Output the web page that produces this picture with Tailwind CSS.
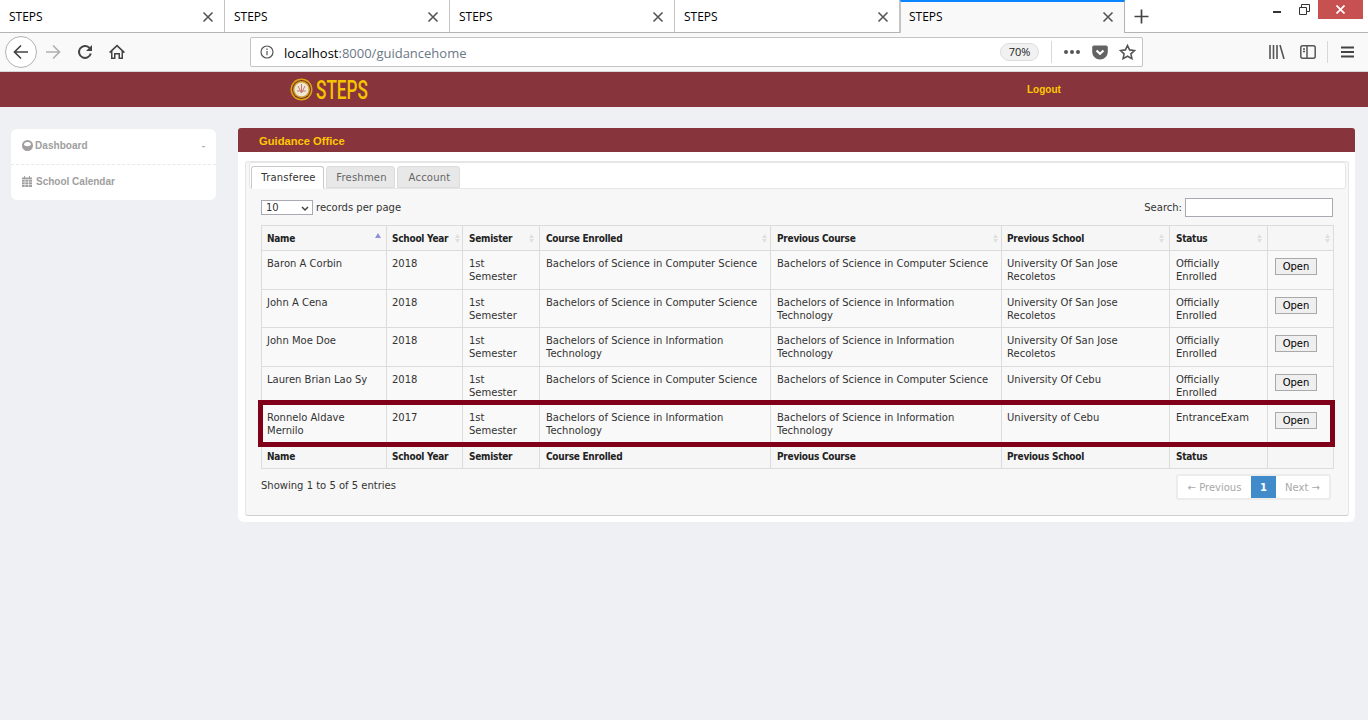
<!DOCTYPE html>
<html lang="en">
<head>
  <meta charset="UTF-8" />
  <title>STEPS</title>
  <script src="https://cdn.jsdelivr.net/npm/@tailwindcss/browser@4"></script>
</head>
<body class="bg-[#eef0f4] min-h-screen font-['Liberation_Sans',sans-serif] overflow-hidden">
  <!-- Tab strip -->
  <div class="h-[33px] bg-white border-b border-[#b4b4b4] flex relative font-['Open_Sans',sans-serif] text-[12px] text-black">
    <div class="w-[225px] h-[32px] pt-px border-r border-[#c4c4c4] flex items-center justify-between pl-[9px] pr-[10px]">
      <span>STEPS</span>
      <svg class="w-[12px] h-[12px] stroke-[#555]" viewBox="0 0 12 12" stroke-width="1.6"><path d="M1.5 1.5l9 9M10.5 1.5l-9 9" /></svg>
    </div>
    <div class="w-[225px] h-[32px] pt-px border-r border-[#c4c4c4] flex items-center justify-between pl-[9px] pr-[10px]">
      <span>STEPS</span>
      <svg class="w-[12px] h-[12px] stroke-[#555]" viewBox="0 0 12 12" stroke-width="1.6"><path d="M1.5 1.5l9 9M10.5 1.5l-9 9" /></svg>
    </div>
    <div class="w-[225px] h-[32px] pt-px border-r border-[#c4c4c4] flex items-center justify-between pl-[9px] pr-[10px]">
      <span>STEPS</span>
      <svg class="w-[12px] h-[12px] stroke-[#555]" viewBox="0 0 12 12" stroke-width="1.6"><path d="M1.5 1.5l9 9M10.5 1.5l-9 9" /></svg>
    </div>
    <div class="w-[225px] h-[32px] pt-px border-r border-[#c4c4c4] flex items-center justify-between pl-[9px] pr-[10px]">
      <span>STEPS</span>
      <svg class="w-[12px] h-[12px] stroke-[#555]" viewBox="0 0 12 12" stroke-width="1.6"><path d="M1.5 1.5l9 9M10.5 1.5l-9 9" /></svg>
    </div>
    <div class="w-[225px] h-[33px] pb-px bg-[#f9f9f9] border-t-2 border-t-[#0a84ff] border-r border-r-[#b4b4b4] border-l border-l-[#c4c4c4] flex items-center justify-between pl-[8px] pr-[10px]">
      <span>STEPS</span>
      <svg class="w-[12px] h-[12px] stroke-[#555]" viewBox="0 0 12 12" stroke-width="1.6"><path d="M1.5 1.5l9 9M10.5 1.5l-9 9" /></svg>
    </div>
    <div class="w-[32px] flex items-center justify-center">
      <svg class="w-[15px] h-[15px] stroke-[#444]" viewBox="0 0 15 15" stroke-width="1.7"><path d="M7.5 0.5v14M0.5 7.5h14" /></svg>
    </div>
    <!-- window buttons -->
    <div class="ml-auto flex h-[19px] items-start">
      <div class="w-[8px] h-[2px] bg-[#333] mt-[11px]"></div>
      <svg class="w-[11px] h-[11px] ml-[18px] mt-[4px] stroke-[#333] fill-none" viewBox="0 0 11 11" stroke-width="1"><path d="M0.5 3.5h7v7h-7zM2.5 3V0.5h8v7H8" /></svg>
      <div class="w-[45px] h-[19px] bg-[#c75050] ml-[8px] mr-[5px] flex items-center justify-center">
        <svg class="w-[9px] h-[9px] stroke-white" viewBox="0 0 9 9" stroke-width="1.7"><path d="M0.5 0.5l8 8M8.5 0.5l-8 8" /></svg>
      </div>
    </div>
  </div>

  <!-- Toolbar -->
  <div class="h-[39px] bg-[#f9f9f9] border-b border-[#d6d6d6] flex items-center relative">
    <div class="ml-[5px] w-[32px] h-[32px] rounded-full border border-[#b4b4b4] bg-white flex items-center justify-center">
      <svg class="w-[16px] h-[16px] stroke-[#444] fill-none" viewBox="0 0 16 16" stroke-width="1.7"><path d="M15 8H1.5M8 1.5L1.5 8 8 14.5" /></svg>
    </div>
    <svg class="w-[16px] h-[16px] ml-[8px] stroke-[#b0b0b0] fill-none" viewBox="0 0 16 16" stroke-width="1.7"><path d="M1 8h13.5M8 1.5L14.5 8 8 14.5" /></svg>
    <svg class="w-[16px] h-[16px] ml-[16px] stroke-[#444] fill-none" viewBox="0 0 16 16" stroke-width="2"><path d="M13.8 9.5A6 6 0 1 1 12.2 3.6L14 5.5" /><path class="fill-[#444] stroke-none" d="M15 1v6H9z" /></svg>
    <svg class="w-[16px] h-[16px] ml-[16px] fill-[#444]" viewBox="0 0 16 16"><path d="M8 0.5L0 8l1.2 1.3L2 8.600V15h4.500v-4.500h3V15H14V8.600l.8.700L16 8zM8 2.700l4.500 4.300V13.500h-1.500V9H5v4.500H3.500V7z" /></svg>
    <!-- address bar -->
    <div class="absolute left-[250px] top-[4px] w-[893px] h-[30px] bg-white border border-[#c4c4c4] rounded-[2px] flex items-center font-['Open_Sans',sans-serif]">
      <svg class="w-[14px] h-[14px] ml-[9px] stroke-[#555] fill-none" viewBox="0 0 14 14" stroke-width="1.2"><circle cx="7" cy="7" r="6" /><path d="M7 6v4.200M7 3.400v1.500" /></svg>
      <span class="ml-[10px] mt-[3px] text-[13px] text-black">localhost<span class="text-[#6b7785]">:8000/guidancehome</span></span>
      <span class="ml-auto w-[39px] h-[18px] rounded-full bg-[#f1f1f1] border border-[#ddd] text-[11px] text-[#222] flex items-center justify-center">70%</span>
      <div class="w-px h-[22px] bg-[#d8d8d8] ml-[12px]"></div>
      <div class="flex gap-[2px] ml-[12px]">
        <i class="w-[4px] h-[4px] rounded-full bg-[#555]"></i><i class="w-[4px] h-[4px] rounded-full bg-[#555]"></i><i class="w-[4px] h-[4px] rounded-full bg-[#555]"></i>
      </div>
      <svg class="w-[16px] h-[15px] ml-[12px]" viewBox="0 0 16 15"><path class="fill-[#636363]" d="M2 0.500h12a1.800 1.800 0 0 1 1.800 1.800V7A7.800 7.500 0 0 1 0.200 7V2.300A1.800 1.800 0 0 1 2 0.500z" /><path class="stroke-white fill-none" stroke-width="2.200" d="M4.500 5.500L8 8.800l3.500-3.300" /></svg>
      <svg class="w-[17px] h-[16px] ml-[11px] mr-[6px] stroke-[#555] fill-none" viewBox="0 0 17 16" stroke-width="1.600"><path d="M8.500 1.500l2.100 4.400 4.900.600-3.600 3.300 1 4.800-4.400-2.400-4.400 2.400 1-4.800-3.600-3.300 4.900-.600z" /></svg>
    </div>
    <!-- right icons -->
    <div class="ml-auto flex items-center">
      <svg class="w-[16px] h-[14px] stroke-[#555] fill-none" viewBox="0 0 16 14" stroke-width="1.600"><path d="M1 0v14M4.500 0v14M8 0v14M11 0l4 14" /></svg>
      <svg class="w-[16px] h-[14px] ml-[15px] stroke-[#555] fill-none" viewBox="0 0 16 14" stroke-width="1.500"><rect x="0.800" y="0.800" width="14.400" height="12.400" rx="2" /><path d="M7 1v12M3 4h2M3 6.500h2" /></svg>
      <div class="w-px h-[22px] bg-[#d8d8d8] ml-[11px]"></div>
      <svg class="w-[13px] h-[12px] ml-[13px] mr-[14px] stroke-[#444] fill-none" viewBox="0 0 13 12" stroke-width="1.800"><path d="M0 1.500h13M0 6h13M0 10.500h13" /></svg>
    </div>
  </div>

  <!-- Site header -->
  <div class="h-[35px] bg-[#88343d] flex items-center relative">
    <div class="ml-[290px] flex items-center">
      <svg class="w-[23px] h-[23px]" viewBox="0 0 23 23">
        <circle cx="11.500" cy="11.500" r="11" fill="#d9a514" />
        <circle cx="11.500" cy="11.500" r="9.500" fill="#7e2a20" />
        <circle cx="11.500" cy="11.500" r="8.500" fill="#c9a030" />
        <circle cx="11.500" cy="11.500" r="7" fill="#efe6d6" />
        <path d="M8 8l3.500 7 3.500-7M11.500 6v9M7 13h9" stroke="#c47a6c" fill="none" />
      </svg>
      <span class="ml-[3px] font-['Roboto',sans-serif] font-medium text-[#f5c400] text-[26px] leading-none inline-block w-[52px] origin-left scale-x-[.66]">STEPS</span>
    </div>
    <a class="absolute left-[1027px] top-[13px] text-[#ffc800] text-[10px] font-bold leading-none">Logout</a>
  </div>

  <!-- Page body -->
  <div class="flex items-start pl-[11px] pt-[21px]">
    <!-- Sidebar -->
    <div class="w-[205px] h-[71px] bg-white rounded-[6px] mt-px text-[10px] font-bold text-[#a09e9e]">
      <div class="h-[36px] pb-[2px] border-b border-dashed border-[#e8e8e8] flex items-center pl-[11px] pr-[11px]">
        <svg class="w-[11px] h-[11px]" viewBox="0 0 11 11"><circle cx="5.500" cy="5.500" r="5.500" fill="#a09e9e" /><path d="M2 5a3.500 3 0 0 1 7 0q-3.500 2.500-7 0z" fill="#fff" /></svg>
        <span class="ml-[2px] tracking-[.05px]">Dashboard</span>
        <span class="ml-auto text-[#b0b0b0]">-</span>
      </div>
      <div class="h-[34px] pb-[2px] flex items-center pl-[11px]">
        <svg class="w-[10px] h-[11px]" viewBox="0 0 10 11"><path d="M0 1.500h10V11H0z" fill="#a09e9e" /><path d="M2 0h1v2H2zM7 0h1v2H7z" fill="#a09e9e" /><path d="M0 3.500h10M0 6h10M0 8.500h10M3 4v7M6.500 4v7" stroke="#fff" stroke-width=".6" /></svg>
        <span class="ml-[4px]">School Calendar</span>
      </div>
    </div>

    <!-- Main -->
    <div class="w-[1117px] ml-[22px] relative">
      <div class="h-[24px] bg-[#88343d] rounded-t-[3px] pl-[21px] flex items-center text-[#ffc800] text-[11.200px] font-bold pt-[2px]">Guidance Office</div>
      <div class="h-[370px] bg-white rounded-b-[6px] pt-[9px] pl-[7px] pr-[6px]">
        <div class="h-[355px] bg-[#f7f7f7] border border-[#e6e6e6] border-b-[#cfcfcf] rounded-[3px] relative font-['DejaVu_Sans',sans-serif] text-[10px] text-[#333]">
          <!-- tabs -->
          <div class="h-[27px] ml-[3px] mr-[2px] bg-white border border-[#e6e6e6] rounded-[3px] flex items-end pl-[1px] gap-[2px] text-[10px] tracking-[.2px]">
            <div class="w-[73px] h-[23px] -mb-px pl-[2px] bg-white border border-[#c8c8c8] border-b-white rounded-t-[3px] flex items-center justify-center text-[#333]">Transferee</div>
            <div class="w-[69px] h-[22px] pl-[2px] bg-[#e8e8e8] border border-[#dcdcdc] rounded-t-[3px] flex items-center justify-center text-[#666]">Freshmen</div>
            <div class="w-[63px] h-[22px] pl-[2px] bg-[#e8e8e8] border border-[#dcdcdc] rounded-t-[3px] flex items-center justify-center text-[#666]">Account</div>
          </div>
          <!-- length + search -->
          <div class="flex items-center justify-between h-[36px] pl-[15px] pr-[15px]">
            <div class="flex items-center">
              <div class="w-[52px] h-[15px] bg-white border border-[#a9a9b4] flex items-center justify-between pl-[4px] pr-[3px] text-[10px]">
                <span>10</span>
                <svg class="w-[8px] h-[6px] stroke-[#444] fill-none mt-[3px]" viewBox="0 0 8 6" stroke-width="1.500"><path d="M1 1l3 3 3-3" /></svg>
              </div>
              <span class="ml-[3px]">records per page</span>
            </div>
            <div class="flex items-center">
              <span>Search:</span>
              <div class="w-[148px] h-[19px] ml-[3px] bg-white border border-[#a9a9b4]"></div>
            </div>
          </div>
          <!-- table -->
          <div class="mx-[15px]">
            <table class="table-fixed border-collapse w-[1072px] bg-[#f9f9f9]">
              <colgroup>
                <col class="w-[125px]" /><col class="w-[76px]" /><col class="w-[77px]" /><col class="w-[231px]" /><col class="w-[231px]" /><col class="w-[168px]" /><col class="w-[98px]" /><col class="w-[66px]" />
              </colgroup>
              <thead class="bg-[#f6f6f6] text-[#222] font-['DejaVu_Sans_Condensed','DejaVu_Sans',sans-serif] tracking-[-.25px]">
                <tr class="h-[25px] text-left">
                  <th class="border border-[#dcdcdc] px-[5px] font-bold"><div class="flex justify-between items-center">Name<svg class="w-[6px] h-[5px] -mt-[5px]" viewBox="0 0 6 5"><path d="M3 0l3 5H0z" fill="#8f8fdc" /></svg></div></th>
                  <th class="border border-[#dcdcdc] pl-[5px] pr-[2px] font-bold whitespace-nowrap"><div class="flex justify-between items-center">School Year<svg class="w-[5px] h-[9px]" viewBox="0 0 5 9"><path d="M2.500 0L5 4H0zM2.500 9L0 5h5z" fill="#e0e0e0" /></svg></div></th>
                  <th class="border border-[#dcdcdc] pl-[6px] pr-[5px] font-bold"><div class="flex justify-between items-center">Semister<svg class="w-[5px] h-[9px]" viewBox="0 0 5 9"><path d="M2.500 0L5 4H0zM2.500 9L0 5h5z" fill="#e0e0e0" /></svg></div></th>
                  <th class="border border-[#dcdcdc] pl-[6px] pr-[3px] font-bold"><div class="flex justify-between items-center">Course Enrolled<svg class="w-[5px] h-[9px]" viewBox="0 0 5 9"><path d="M2.500 0L5 4H0zM2.500 9L0 5h5z" fill="#e0e0e0" /></svg></div></th>
                  <th class="border border-[#dcdcdc] pl-[6px] pr-[3px] font-bold"><div class="flex justify-between items-center">Previous Course<svg class="w-[5px] h-[9px]" viewBox="0 0 5 9"><path d="M2.500 0L5 4H0zM2.500 9L0 5h5z" fill="#e0e0e0" /></svg></div></th>
                  <th class="border border-[#dcdcdc] pl-[5px] pr-[5px] font-bold"><div class="flex justify-between items-center">Previous School<svg class="w-[5px] h-[9px]" viewBox="0 0 5 9"><path d="M2.500 0L5 4H0zM2.500 9L0 5h5z" fill="#e0e0e0" /></svg></div></th>
                  <th class="border border-[#dcdcdc] pl-[6px] pr-[5px] font-bold"><div class="flex justify-between items-center">Status<svg class="w-[5px] h-[9px]" viewBox="0 0 5 9"><path d="M2.500 0L5 4H0zM2.500 9L0 5h5z" fill="#e0e0e0" /></svg></div></th>
                  <th class="border border-[#dcdcdc] pl-[6px] pr-[3px] font-bold"><div class="flex justify-end items-center"><svg class="w-[5px] h-[9px]" viewBox="0 0 5 9"><path d="M2.500 0L5 4H0zM2.500 9L0 5h5z" fill="#e0e0e0" /></svg></div></th>
                </tr>
              </thead>
              <tbody class="align-top leading-[13px]" id="rows"></tbody>
              <tfoot class="bg-[#f6f6f6] text-[#222] font-['DejaVu_Sans_Condensed','DejaVu_Sans',sans-serif] tracking-[-.25px]">
                <tr class="h-[25px] text-left">
                  <th class="border border-[#dcdcdc] px-[5px] font-bold">Name</th>
                  <th class="border border-[#dcdcdc] pl-[5px] font-bold whitespace-nowrap">School Year</th>
                  <th class="border border-[#dcdcdc] pl-[6px] font-bold">Semister</th>
                  <th class="border border-[#dcdcdc] pl-[6px] font-bold">Course Enrolled</th>
                  <th class="border border-[#dcdcdc] pl-[6px] font-bold">Previous Course</th>
                  <th class="border border-[#dcdcdc] pl-[5px] font-bold">Previous School</th>
                  <th class="border border-[#dcdcdc] pl-[6px] font-bold">Status</th>
                  <th class="border border-[#dcdcdc]"></th>
                </tr>
              </tfoot>
            </table>
          </div>
          <!-- highlight around last row -->
          <div class="absolute left-[12px] top-[238px] w-[1077px] h-[47px] border-[5px] border-[#7f0018] pointer-events-none"></div>
          <!-- footer -->
          <div class="flex justify-between pl-[15px] pr-[17px] pt-[5px]">
            <span class="mt-[4px]">Showing 1 to 5 of 5 entries</span>
            <div class="flex h-[26px] w-[155px] border-2 border-[#ececec] rounded-[3px] text-[#a8a8a8] bg-white">
              <span class="w-[73px] flex items-center justify-center">← Previous</span>
              <span class="w-[25px] flex items-center justify-center bg-[#428bca] text-white font-bold">1</span>
              <span class="w-[53px] flex items-center justify-center">Next →</span>
            </div>
          </div>
        </div>
      </div>
    </div>
  </div>

  <script>
    // rows of the applicants table
    const data = [
      ['Baron A Corbin', '2018', 'Bachelors of Science in Computer Science', 'Bachelors of Science in Computer Science', 'University Of San Jose Recoletos', 'Officially Enrolled', 39],
      ['John A Cena', '2018', 'Bachelors of Science in Computer Science', 'Bachelors of Science in Information Technology', 'University Of San Jose Recoletos', 'Officially Enrolled', 38],
      ['John Moe Doe', '2018', 'Bachelors of Science in Information Technology', 'Bachelors of Science in Information Technology', 'University Of San Jose Recoletos', 'Officially Enrolled', 39],
      ['Lauren Brian Lao Sy', '2018', 'Bachelors of Science in Computer Science', 'Bachelors of Science in Computer Science', 'University Of Cebu', 'Officially Enrolled', 38],
      ['Ronnelo Aldave Mernilo', '2017', 'Bachelors of Science in Information Technology', 'Bachelors of Science in Information Technology', 'University of Cebu', 'EntranceExam', 39],
    ];
    document.getElementById('rows').innerHTML = data.map(r => `
      <tr style="height:${r[6]}px">
        <td class="border border-[#dcdcdc] pl-[5px] pr-[5px] pt-[6px]">${r[0]}</td>
        <td class="border border-[#dcdcdc] pl-[5px] pt-[6px]">${r[1]}</td>
        <td class="border border-[#dcdcdc] pl-[6px] pr-[6px] pt-[6px]">1st Semester</td>
        <td class="border border-[#dcdcdc] pl-[6px] pr-[6px] pt-[6px]">${r[2]}</td>
        <td class="border border-[#dcdcdc] pl-[6px] pr-[6px] pt-[6px]">${r[3]}</td>
        <td class="border border-[#dcdcdc] pl-[5px] pr-[6px] pt-[6px]">${r[4]}</td>
        <td class="border border-[#dcdcdc] pl-[6px] pr-[6px] pt-[6px]">${r[5]}</td>
        <td class="border border-[#dcdcdc] pl-[7px] pt-[7px]"><button class="w-[42px] h-[17px] bg-[#efefef] border border-[#a9a9a9] text-[10px] text-black leading-none flex items-center justify-center">Open</button></td>
      </tr>`).join('');
  </script>
</body>
</html>
